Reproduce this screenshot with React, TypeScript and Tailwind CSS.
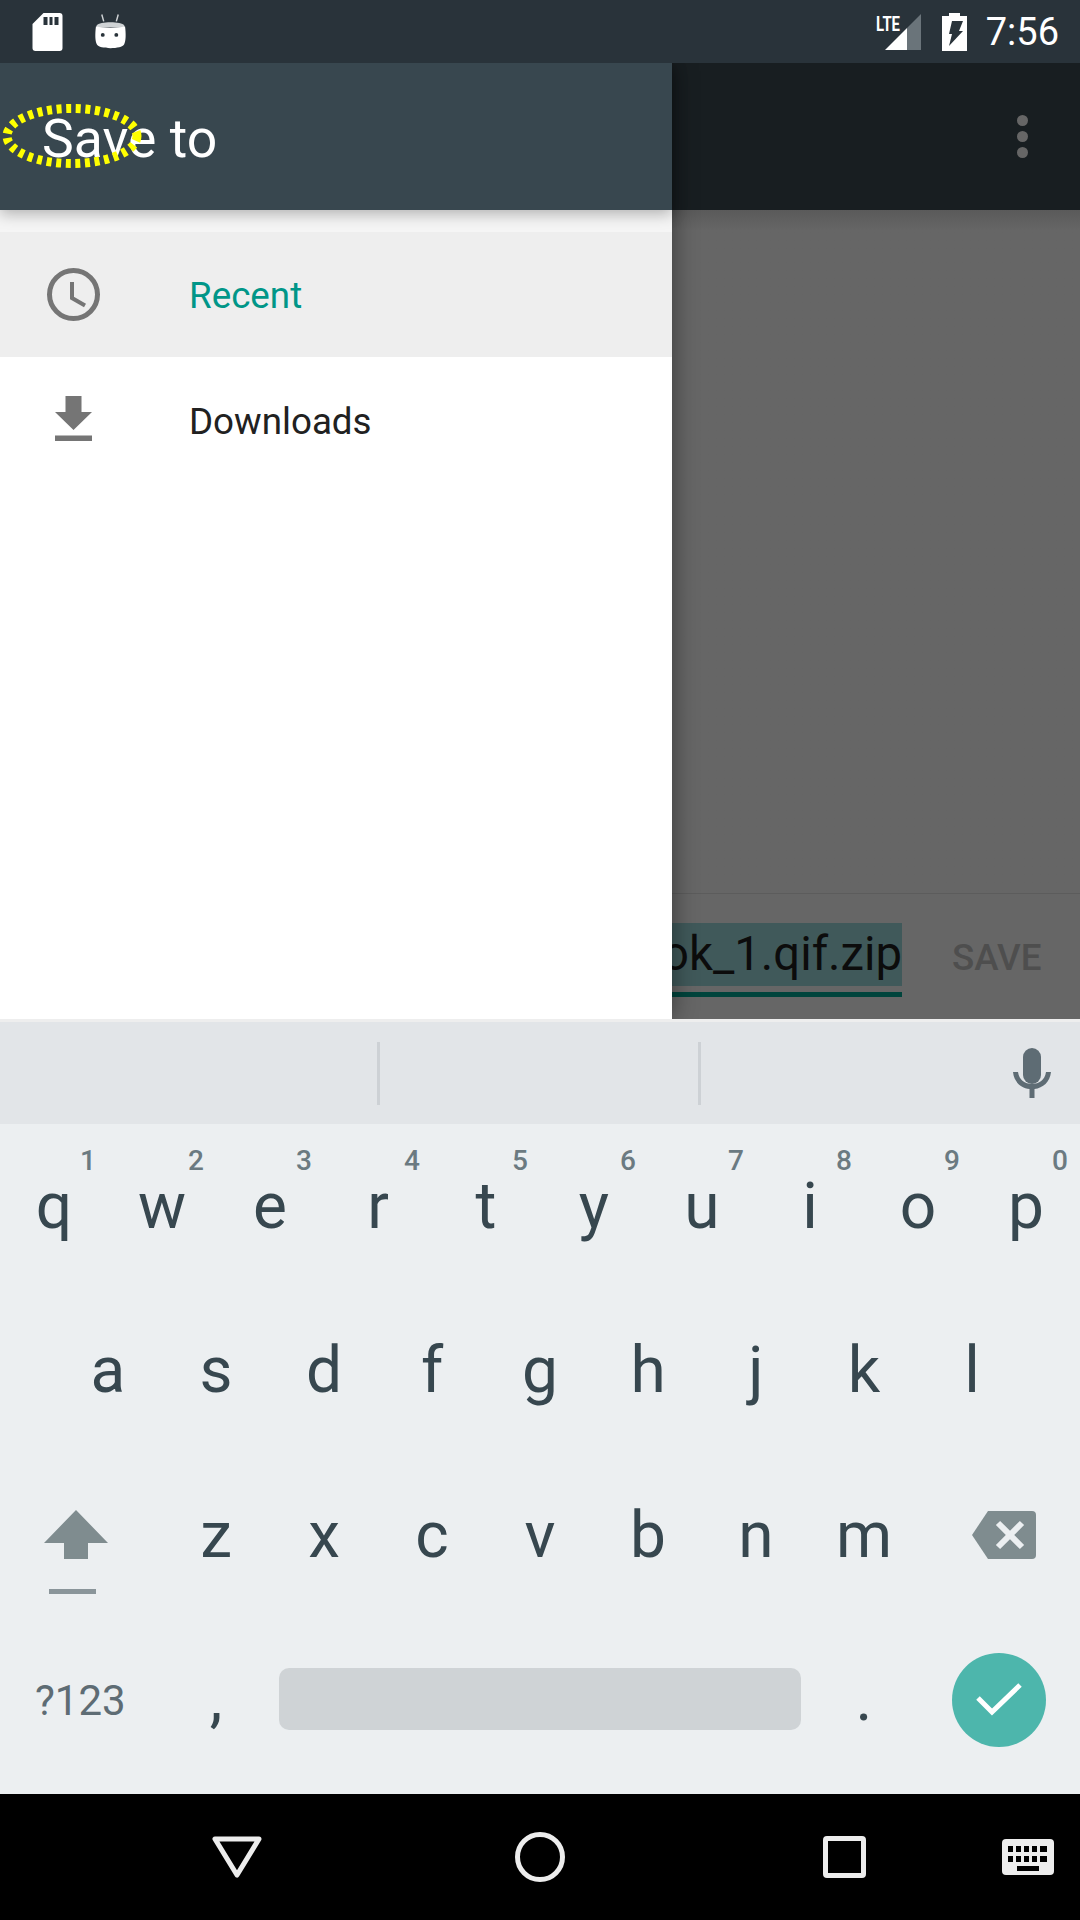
const row1 = [["q","1"],["w","2"],["e","3"],["r","4"],["t","5"],["y","6"],["u","7"],["i","8"],["o","9"],["p","0"]];
const row2 = ["a","s","d","f","g","h","j","k","l"];
const row3 = ["z","x","c","v","b","n","m"];
const keyText = "text-[64px] leading-none text-[#37474f]";

function Key({ label, hint }: { label: string; hint?: string }) {
  return (
    <div className="relative flex h-full w-[108px] items-center justify-center pb-[2px]">
      <span className={keyText}>{label}</span>
      {hint && <span className="absolute right-[12px] top-[21px] text-[28px] font-medium leading-none text-[#6b7a81]">{hint}</span>}
    </div>
  );
}

export default function App() {
  return (
    <div className="flex h-[1920px] w-[1080px] flex-col overflow-hidden bg-black font-['Roboto',sans-serif]">
      {/* status bar */}
      <div className="flex h-[63px] shrink-0 items-center bg-[#29333a] pl-[32px] pr-[21px]">
        <svg width="31" height="38" viewBox="0 0 30 38" className="mr-[32px]">
          <path fill="#fff" d="M11 0H27a3 3 0 0 1 3 3V35a3 3 0 0 1-3 3H3a3 3 0 0 1-3-3V11Z" />
          <path fill="#29333a" d="M11 4h4v8h-4zM17 4h3v8h-3zM22 4h4v8h-4z" />
        </svg>
        <svg width="31" height="38" viewBox="0 0 32 38">
          <path stroke="#cfd3d5" strokeWidth="1.5" d="M7 1l2 7M24 1l-2 7" />
          <path fill="#cfd3d5" d="M2 12c2-4 26-4 28 0v2H2z" />
          <path fill="#fff" d="M1 13c8 2 22 2 30 0 1 8 1 15-1 19-2 5-26 5-28 0-2-4-2-11-1-19Z" />
          <circle cx="8" cy="22" r="2" fill="#29333a" />
          <circle cx="22" cy="22" r="2" fill="#29333a" />
        </svg>
        <div className="flex-1" />
        <svg width="46" height="38" viewBox="0 0 46 38" className="mr-[21px]">
          <path fill="#fff" d="M10 37 32 15V37Z" />
          <path fill="#6a747a" d="M32 15 46 1V37H32Z" />
          <text x="1" y="18" fill="#fff" fontSize="21" fontWeight="700" fontFamily="'Roboto',sans-serif" textLength="24" lengthAdjust="spacingAndGlyphs">LTE</text>
        </svg>
        <svg width="25" height="38" viewBox="0 0 25 38" className="mr-[19px]">
          <path fill="#fff" d="M7 0h11v3h7v35H0V3h7Z" />
          <path fill="#29333a" d="M10 8H21L17 18H21L7 33 10 21H7Z" />
        </svg>
        <span className="text-[38px] leading-none text-white">7:56</span>
      </div>

      {/* app area */}
      <div className="flex h-[956px] shrink-0 overflow-hidden">
        <div className="relative z-10 flex w-[672px] shrink-0 flex-col bg-white shadow-[0_0_24px_rgba(0,0,0,0.45)]">
          <div className="relative z-10 flex h-[147px] shrink-0 items-center bg-[#38474f] pl-[42px] pt-[4px] shadow-[0_4px_14px_rgba(0,0,0,0.28)]">
            <span className="text-[53.5px] leading-none text-white">Save to</span>
            <svg className="absolute left-0 top-[39px]" width="146" height="68" viewBox="0 0 146 68">
              <ellipse cx="72" cy="34" rx="65" ry="27.500" fill="none" stroke="#ffff00" strokeWidth="9" strokeDasharray="5 4.6" />
            </svg>
          </div>
          <div className="h-[22px] shrink-0 bg-[#f5f5f5]" />
          <div className="flex h-[125px] shrink-0 items-center bg-[#eeeeee]">
            <div className="flex w-[189px] justify-start pl-[47px]">
              <svg width="53" height="53" viewBox="0 0 53 53" fill="none" stroke="#757575">
                <circle cx="26.5" cy="26.5" r="24" strokeWidth="5" />
                <path d="M25 14V30L38 37.5" strokeWidth="4" />
              </svg>
            </div>
            <span className="pt-[3px] text-[36.75px] leading-none text-[#009688]">Recent</span>
          </div>
          <div className="flex h-[126px] shrink-0 items-center">
            <div className="flex w-[189px] justify-start pb-[4px] pl-[55px]">
              <svg width="37" height="45" viewBox="0 0 37 45" fill="#757575">
                <path d="M10.5 0H26.5V16H37L18.500 34 0 16H10.500Z" />
                <path d="M0 39.500H37V45H0Z" />
              </svg>
            </div>
            <span className="pt-[5px] text-[36.75px] leading-none text-[#212121]">Downloads</span>
          </div>
        </div>

        <div className="flex min-w-0 flex-1 flex-col">
          <div className="relative flex h-[147px] shrink-0 items-center justify-end bg-[#181e21] pr-[52px]">
            <div className="flex flex-col gap-[5px]">
              <div className="h-[11px] w-[11px] rounded-full bg-[#666666]" />
              <div className="h-[11px] w-[11px] rounded-full bg-[#666666]" />
              <div className="h-[11px] w-[11px] rounded-full bg-[#666666]" />
            </div>
          </div>
          <div className="h-[683px] shrink-0 bg-[#666666] bg-gradient-to-b from-[#5a5a5a] from-0% to-[#666666] to-[3%]" />
          <div className="flex h-[126px] shrink-0 items-start border-t-[1px] border-[#5c5c5c] bg-[#666666]">
            <div className="mt-[29px] w-[230px] shrink-0">
              <div className="flex h-[63px] items-center justify-end overflow-hidden whitespace-nowrap bg-[#40595a] text-[47.25px] leading-none text-[#0c0c0c]">
                ok_1.qif.zip
              </div>
              <div className="mt-[6px] h-[5px] bg-[#00443c]" />
            </div>
            <span className="ml-[50px] mt-[46px] text-[36.75px] font-medium leading-none text-[#4e4e4e]">SAVE</span>
          </div>
        </div>
      </div>

      {/* keyboard */}
      <div className="flex h-[775px] shrink-0 flex-col border-t-[3px] border-[#eeeeee] bg-[#eceff1]">
        <div className="relative flex h-[104px] shrink-0 items-center border-b-[2px] border-[#eceff1] bg-[#e2e5e8]">
          <div className="ml-[377px] h-[63px] w-[3px] bg-[#cdd1d5]" />
          <div className="ml-[318px] h-[63px] w-[3px] bg-[#cdd1d5]" />
          <svg className="ml-[312px]" width="38" height="50" viewBox="0 0 38 50" fill="#5e6c74">
            <rect x="10" y="0" width="18" height="36" rx="9" />
            <path d="M0 24h5c1 8 7 12 14 12s13-4 14-12h5c-1 10-8 16-16.500 17V50h-5V41C8 40 1 34 0 24Z" />
          </svg>
        </div>

        <div className="flex h-[163px] shrink-0">{row1.map(([l, h]) => <Key key={l} label={l} hint={h} />)}</div>
        <div className="flex h-[165px] shrink-0 pl-[54px]">{row2.map((l) => <Key key={l} label={l} />)}</div>
        <div className="flex h-[165px] shrink-0 items-center">
          <div className="relative flex h-full w-[162px] items-center justify-center pr-[11px]">
            <svg width="64" height="84" viewBox="0 0 64 84" className="mt-[30px]">
              <path fill="#7f8c8f" d="M32 0 64 33H44V49H20V33H0Z" />
              <path fill="#8a959a" d="M5 79H52V84H5Z" />
            </svg>
          </div>
          {row3.map((l) => <Key key={l} label={l} />)}
          <div className="flex h-full flex-1 items-center justify-center pb-[4px] pl-[10px]">
            <svg width="64" height="48" viewBox="0 0 64 48">
              <path fill="#7f8c8f" d="M16 0H60a4 4 0 0 1 4 4V44a4 4 0 0 1-4 4H16L0 24Z" />
              <path stroke="#eceff1" strokeWidth="6" d="M26 12 50 36M50 12 26 36" />
            </svg>
          </div>
        </div>
        <div className="flex h-[175px] shrink-0 items-start pt-[49px]">
          <div className="flex h-[62px] w-[162px] items-center pl-[35px] pt-[4px] text-[42px] leading-none text-[#5e6c74]">?123</div>
          <div className="flex h-[62px] w-[108px] items-center justify-center"><span className={keyText}>,</span></div>
          <div className="ml-[9px] h-[62px] w-[522px] rounded-[10px] bg-[#cfd3d6]" />
          <div className="ml-[9px] flex h-[62px] w-[108px] items-center justify-center"><span className={keyText}>.</span></div>
          <div className="-mt-[15px] ml-[34px] flex h-[94px] w-[94px] items-center justify-center rounded-full bg-[#4db6ac]">
            <svg width="46" height="36" viewBox="0 0 46 36" fill="none" stroke="#fff" strokeWidth="5">
              <path d="M2 16 16 30 44 3" />
            </svg>
          </div>
        </div>
      </div>

      {/* nav bar */}
      <div className="flex h-[126px] shrink-0 items-center pl-[212px]">
        <svg width="50" height="42" viewBox="0 0 50 42" fill="none" stroke="#ededed" strokeWidth="5" strokeLinejoin="round">
          <path d="M3 3H47L25 39Z" />
        </svg>
        <svg width="50" height="50" viewBox="0 0 50 50" fill="none" stroke="#ededed" strokeWidth="5" className="ml-[253px]">
          <circle cx="25" cy="25" r="22.500" />
        </svg>
        <svg width="43" height="42" viewBox="0 0 43 42" fill="none" stroke="#ededed" strokeWidth="5" className="ml-[258px]">
          <rect x="2.500" y="2.500" width="38" height="37" rx="1.500" />
        </svg>
        <svg width="52" height="36" viewBox="0 0 52 36" className="ml-[136px]">
          <rect width="52" height="36" rx="4" fill="#ededed" />
          <path fill="#000" d="M6 7h5v6H6zM14 7h5v6h-5zM22 7h5v6h-5zM30 7h5v6h-5zM38 7h7v6h-7zM6 17h5v6H6zM14 17h5v6h-5zM22 17h5v6h-5zM30 17h5v6h-5zM38 17h7v6h-7zM15 27h22v5H15z" />
        </svg>
      </div>
    </div>
  );
}
